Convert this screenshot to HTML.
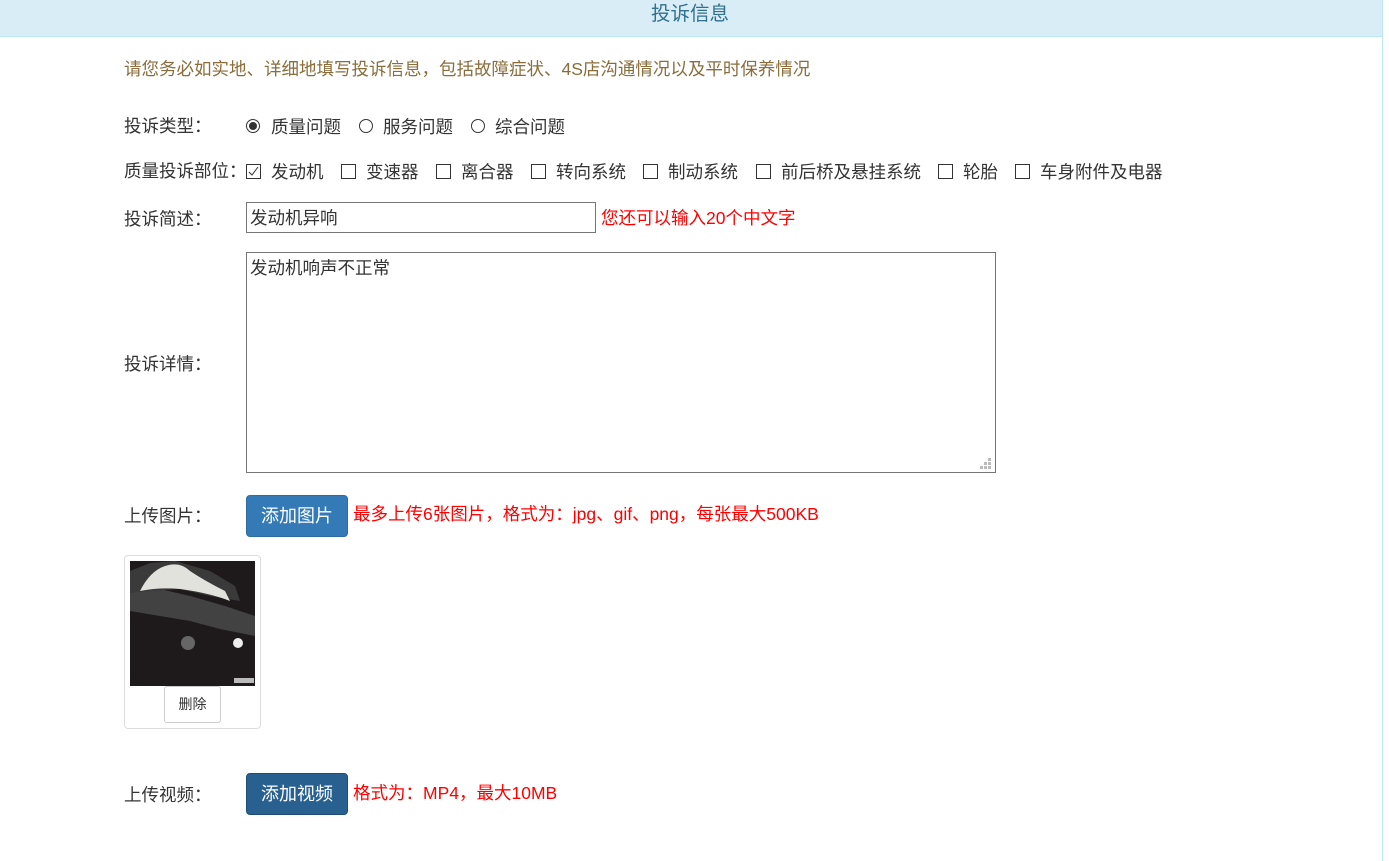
<!DOCTYPE html>
<html><head><meta charset="utf-8"><style>
body{margin:0;width:1389px;height:861px;background:#fff;font-family:"Liberation Sans","Noto Sans CJK SC",sans-serif;font-size:17.5px;color:#333;position:relative;overflow:hidden}
.a{position:absolute;white-space:nowrap;line-height:22px}
.hd{position:absolute;left:0;top:0;width:1382px;height:36px;background:#d9edf7;border-bottom:1px solid #bce8f1}
.vr{position:absolute;left:1382px;top:0;width:1px;height:861px;background:#bce8f1}
.rad{position:absolute;width:14px;height:14px;border:1px solid #333;border-radius:50%;box-sizing:border-box}
.rad.on::after{content:"";position:absolute;left:2px;top:2px;width:8px;height:8px;border-radius:50%;background:#333}
.cb{position:absolute;width:15px;height:15px;border:1px solid #333;box-sizing:border-box;background:#fff}
.red{color:#f00}
.btn{position:absolute;width:102px;height:42px;box-sizing:border-box;border:1px solid #2e6da4;background:#337ab7;color:#fff;border-radius:4px;text-align:center;line-height:40px;font-size:18px}
</style></head><body>
<div class="hd"></div><div class="vr"></div>
<div class="a" style="left:651px;top:3px;color:#31708f;font-size:19.5px">投诉信息</div>
<div class="a" style="left:124px;top:58px;color:#8a6d3b">请您务必如实地、详细地填写投诉信息，包括故障症状、4S店沟通情况以及平时保养情况</div>

<div class="a" style="left:124px;top:115px">投诉类型：</div>
<div class="rad on" style="left:246px;top:119px"></div><div class="a" style="left:271px;top:116px">质量问题</div>
<div class="rad" style="left:359px;top:119px"></div><div class="a" style="left:383px;top:116px">服务问题</div>
<div class="rad" style="left:471px;top:119px"></div><div class="a" style="left:495px;top:116px">综合问题</div>

<div class="a" style="left:124px;top:160px">质量投诉部位：</div>
<div class="cb" style="left:246px;top:164px"><svg width="13" height="13" style="position:absolute;left:0;top:0"><path d="M2 7 L5 10 L11 2" fill="none" stroke="#333" stroke-width="1"/></svg></div><div class="a" style="left:271px;top:161px">发动机</div>
<div class="cb" style="left:341px;top:164px"></div><div class="a" style="left:366px;top:161px">变速器</div>
<div class="cb" style="left:436px;top:164px"></div><div class="a" style="left:461px;top:161px">离合器</div>
<div class="cb" style="left:531px;top:164px"></div><div class="a" style="left:556px;top:161px">转向系统</div>
<div class="cb" style="left:643px;top:164px"></div><div class="a" style="left:668px;top:161px">制动系统</div>
<div class="cb" style="left:756px;top:164px"></div><div class="a" style="left:781px;top:161px">前后桥及悬挂系统</div>
<div class="cb" style="left:938px;top:164px"></div><div class="a" style="left:963px;top:161px">轮胎</div>
<div class="cb" style="left:1015px;top:164px"></div><div class="a" style="left:1040px;top:161px">车身附件及电器</div>

<div class="a" style="left:124px;top:208px">投诉简述：</div>
<div style="position:absolute;left:246px;top:202px;width:350px;height:31px;box-sizing:border-box;border:1px solid #767676"></div>
<div class="a" style="left:250px;top:207px">发动机异响</div>
<div class="a red" style="left:601px;top:207px">您还可以输入20个中文字</div>

<div class="a" style="left:124px;top:353px">投诉详情：</div>
<div style="position:absolute;left:246px;top:252px;width:750px;height:221px;box-sizing:border-box;border:1px solid #767676"></div>
<div class="a" style="left:250px;top:257px">发动机响声不正常</div>
<svg style="position:absolute;left:980px;top:458px" width="12" height="12"><g fill="#bbb"><rect x="8" y="0" width="3" height="3"/><rect x="4" y="4" width="3" height="3"/><rect x="8" y="4" width="3" height="3"/><rect x="0" y="8" width="3" height="3"/><rect x="4" y="8" width="3" height="3"/><rect x="8" y="8" width="3" height="3"/></g></svg>

<div class="a" style="left:124px;top:505px">上传图片：</div>
<div class="btn" style="left:246px;top:495px">添加图片</div>
<div class="a red" style="left:353px;top:503px">最多上传6张图片，格式为：jpg、gif、png，每张最大500KB</div>

<div style="position:absolute;left:124px;top:555px;width:137px;height:174px;box-sizing:border-box;border:1px solid #ddd;border-radius:4px"></div>
<svg style="position:absolute;left:130px;top:561px" width="125" height="125">
<rect width="125" height="125" fill="#1e1a1c"/>
<path d="M0 30 L30 28 L60 35 L95 45 L125 55 L125 75 L90 68 L60 60 L30 55 L0 50Z" fill="#4c4c4e" opacity="0.8"/>
<path d="M0 10 L20 2 L45 0 L80 10 L105 25 L110 40 L80 35 L50 28 L20 30 L0 32Z" fill="#3a3a3a"/>
<path d="M10 30 Q20 10 35 5 Q50 0 60 10 Q75 20 95 30 L100 40 Q80 32 50 28 Q30 26 10 30Z" fill="#e2e2dc"/>
<circle cx="58" cy="82" r="7" fill="#666"/><circle cx="108" cy="82" r="5" fill="#eee"/>
<rect x="104" y="117" width="20" height="5" fill="#bbb"/>
</svg>
<div style="position:absolute;left:164px;top:686px;width:57px;height:37px;box-sizing:border-box;border:1px solid #ccc;border-radius:3px;background:#fff;text-align:center;line-height:35px;font-size:14px">删除</div>

<div class="a" style="left:124px;top:784px">上传视频：</div>
<div class="btn" style="left:246px;top:773px;background:#286090;border-color:#204d74">添加视频</div>
<div class="a red" style="left:353px;top:782px">格式为：MP4，最大10MB</div>
</body></html>
